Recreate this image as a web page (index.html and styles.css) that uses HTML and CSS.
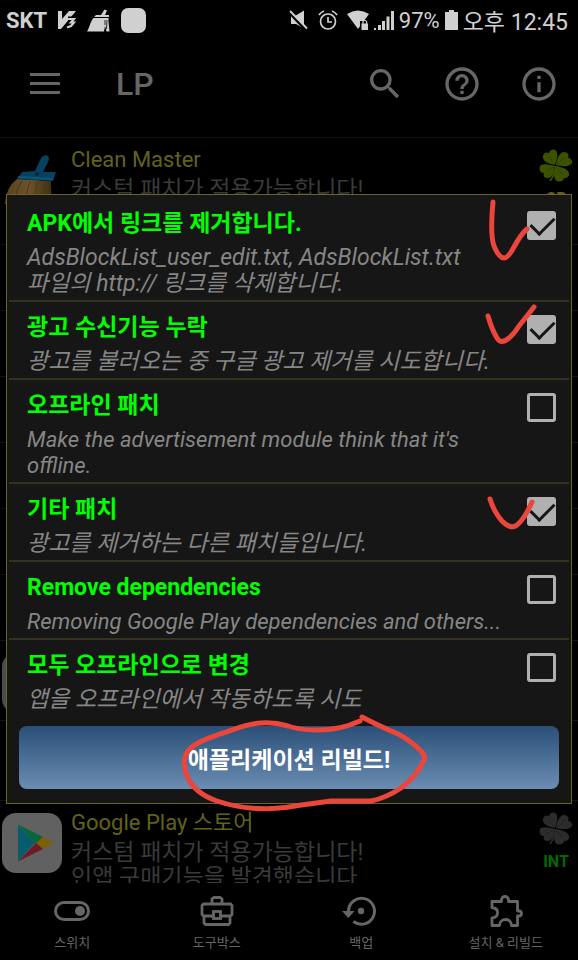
FILE: index.html
```html
<!DOCTYPE html>
<html lang="ko">
<head>
<meta charset="utf-8">
<meta name="viewport" content="width=device-width, initial-scale=1">
<title>LP</title>
<link rel="stylesheet" href="styles.css">
</head>
<body>
<svg class="defs" aria-hidden="true">
  <symbol id="clover" viewBox="0 0 34 34">
    <g fill="currentColor">
      <path d="M16 16C10 15 3 13 4 7C5 3 8 3 10 4C11 0 17-1 18 4C19 9 17 13 16 16Z"/>
      <path d="M17 16C18 9 21 2 26 3C30 4 30 7 29 9C33 9 35 14 31 16C27 18 21 17 17 16Z"/>
      <path d="M17 17C24 18 31 21 30 26C29 29 27 29 25 29C25 33 18 34 16 30C14 26 16 21 17 17Z"/>
      <path d="M16 17C15 22 14 29 9 29C5 29 4 27 5 24C1 24-1 19 2 16C6 14 12 16 16 17Z"/>
    </g>
    <path d="M17 17Q15 27 11 32" fill="none" stroke="currentColor" stroke-width="1.5"/>
    <path d="M16 16L10 8M18 16L26 8M17 18L24 26M15 18L7 22" fill="none" stroke="#000" stroke-opacity=".2" stroke-width="1"/>
  </symbol>
</svg>

<div class="status">
  <div class="status-side">
    <b class="carrier">SKT</b>
    <svg class="i-v3" viewBox="0 0 18 20" aria-hidden="true"><path d="M0 1h4v8L11 1h7L3 19H0Z" fill="currentColor"/><path d="M10 8.500h6L13 12h3l-3 5-5 2" fill="none" stroke="#000" stroke-width="4"/><path d="M10 9h6l-3 3.500h3L13 16l-4 1.500" fill="none" stroke="currentColor" stroke-width="2.200"/></svg>
    <svg class="i-broom" viewBox="0 0 23 23" aria-hidden="true"><path d="M14 6l3.500-5.500L20 1.500 18 6h4v2H7L9 6ZM6.500 9h15v4l1 9.500h-3L18 17l-1 5.500H0C3 18 3 13 6.500 9Z" fill="currentColor"/><path d="M18 11v5M20 11l-.5 9" stroke="#000" stroke-width=".8"/></svg>
    <span class="app-blob"></span>
  </div>
  <div class="status-side status-right">
    <svg class="i-mute" viewBox="0 0 20 20" aria-hidden="true"><path d="M2 6h4l9-5.500v18L7 14H2Z" fill="currentColor"/><path d="M0 2l17 18" stroke="#000" stroke-width="3"/><path d="M1 1l17 17.500" stroke="currentColor" stroke-width="1.800"/></svg>
    <svg class="i-alarm" viewBox="0 0 20 20" aria-hidden="true"><g fill="none" stroke="currentColor" stroke-width="1.700"><circle cx="10" cy="11.500" r="7.500"/><path d="M10 7v5h4M1 5Q3 2 6 1M19 5Q17 2 14 1"/></g></svg>
    <svg class="i-wifi" viewBox="0 0 22 20" aria-hidden="true"><path d="M0 4Q11-3 22 4L11 19Z" fill="currentColor"/><path d="M13 11h9v9h-9Z" fill="#000"/><path d="M14.500 13.500h6.500V20h-6.500Z" fill="currentColor"/><path d="M16 14v-2.500q1.800-2.500 3.600 0V14" fill="none" stroke="currentColor" stroke-width="1.200"/></svg>
    <svg class="i-signal" viewBox="0 0 20 20" aria-hidden="true"><path d="M0 18h2v2H0ZM4 15h3v5H4ZM8 11h3v9H8ZM12.500 6.500h3V20h-3ZM17 1h3v19h-3Z" fill="currentColor"/></svg>
    <span class="percent">97%</span>
    <svg class="i-battery" viewBox="0 0 13 20" aria-hidden="true"><path d="M4 0h5v2h4v18H0V2h4Z" fill="currentColor"/></svg>
    <span class="clock">오후 12:45</span>
  </div>
</div>

<header class="appbar">
  <button class="icon-btn menu" aria-label="메뉴"><svg viewBox="0 0 30 22"><path d="M0 1.500h30M0 10.500h30M0 19.500h30" stroke="currentColor" stroke-width="3"/></svg></button>
  <h1>LP</h1>
  <div class="actions">
    <button class="icon-btn" aria-label="검색"><svg viewBox="0 0 24 24"><path fill="currentColor" d="M15.500 14h-.79l-.28-.27A6.471 6.471 0 0 0 16 9.500 6.500 6.500 0 1 0 9.500 16c1.610 0 3.090-.59 4.230-1.570l.27.28v.79l5 4.990L20.490 19l-4.990-5zm-6 0C7.010 14 5 11.990 5 9.500S7.010 5 9.500 5 14 7.010 14 9.500 11.990 14 9.500 14z"/></svg></button>
    <button class="icon-btn" aria-label="도움말"><svg viewBox="0 0 24 24"><path fill="currentColor" d="M11 18h2v-2h-2v2zm1-16C6.480 2 2 6.480 2 12s4.480 10 10 10 10-4.480 10-10S17.520 2 12 2zm0 18c-4.410 0-8-3.590-8-8s3.590-8 8-8 8 3.590 8 8-3.590 8-8 8zm0-14c-2.210 0-4 1.790-4 4h2c0-1.100.9-2 2-2s2 .9 2 2c0 2-3 1.750-3 5h2c0-2.250 3-2.500 3-5 0-2.210-1.790-4-4-4z"/></svg></button>
    <button class="icon-btn" aria-label="정보"><svg viewBox="0 0 24 24"><path fill="currentColor" d="M11 17h2v-6h-2v6zm1-15C6.480 2 2 6.480 2 12s4.480 10 10 10 10-4.480 10-10S17.520 2 12 2zm0 18c-4.410 0-8-3.590-8-8s3.590-8 8-8 8 3.590 8 8-3.590 8-8 8zM11 9h2V7h-2v2z"/></svg></button>
  </div>
</header>

<ul class="apps">
  <li class="app first">
    <svg class="app-icon" viewBox="0 0 60 60" aria-hidden="true">
      <defs><linearGradient id="hair" x1="0" x2="1"><stop offset="0" stop-color="#59431c"/><stop offset=".5" stop-color="#6b532a"/><stop offset="1" stop-color="#3d2c12"/></linearGradient></defs>
      <path d="M15 35L49 37Q49 50 51 60H3Q4 43 15 35Z" fill="url(#hair)"/>
      <path d="M20 37Q14 45 13 60M28 37Q24 47 24 60M35 38Q33 48 34 60M43 38Q42 48 44 60" fill="none" stroke="#4a3718"/>
      <path d="M20 28L33 27L39 14Q42 10 46 12Q48 14 46 18L41 28L54 28L51 37L15 35Z" fill="#08405f"/>
      <path d="M16 33L51 35" stroke="#0b567a" stroke-width="2"/>
      <circle cx="35" cy="30" r="2" fill="#052a42"/>
    </svg>
    <div class="app-text"><h2>Clean Master</h2><p>커스텀 패치가 적용가능합니다!</p></div>
    <div class="app-mark lucky"><svg viewBox="0 0 34 34" aria-hidden="true"><use href="#clover"/></svg><b>CB</b></div>
  </li>
  <li class="app small"></li>
  <li class="app small"></li>
  <li class="app small"></li>
  <li class="app small"></li>
  <li class="app small"></li>
  <li class="app small"></li>
  <li class="app mid"><span class="tile"></span></li>
  <li class="app mid"></li>
  <li class="app">
    <svg class="app-icon" viewBox="0 0 60 60" aria-hidden="true">
      <rect width="60" height="60" rx="14" fill="#616161"/>
      <path d="M16 12V48L33 30Z" fill="#065c6b"/>
      <path d="M16 11.500L41 24L34 31Z" fill="#03683b"/>
      <path d="M41 24L50 28.500Q51.500 30 50 31.500L41 36L34 30Z" fill="#7d5f08"/>
      <path d="M16 48.500L34 30L41 36Z" fill="#6f1a24"/>
    </svg>
    <div class="app-text"><h2>Google Play 스토어</h2><p>커스텀 패치가 적용가능합니다!<br>인앱 구매기능을 발견했습니다</p></div>
    <div class="app-mark"><svg viewBox="0 0 34 34" aria-hidden="true"><use href="#clover"/></svg><b>INT</b></div>
  </li>
</ul>

<nav class="tabs">
  <button><svg viewBox="0 0 40 34" aria-hidden="true"><rect x="3.500" y="8.500" width="33" height="17" rx="8.500" fill="none" stroke="currentColor" stroke-width="3"/><circle cx="28" cy="17" r="5" fill="currentColor"/></svg>스위치</button>
  <button><svg viewBox="0 0 40 34" aria-hidden="true"><g fill="none" stroke="currentColor" stroke-width="2.800"><path d="M15 10V5l2-1.500h6L25 5v5M16 22H6.500L5 20.500v-9L6.500 10h27l1.500 1.500v9L33.500 22H24M7 22v7L8.500 30.500h23l1.500-1.500v-7"/><rect x="16.500" y="17.500" width="7" height="7"/></g></svg>도구박스</button>
  <button><svg viewBox="0 0 40 34" aria-hidden="true"><path d="M7.500 18V17A13 13 0 1 1 12.500 27.500" fill="none" stroke="currentColor" stroke-width="3"/><path d="M1 17h12.500L7.300 24Z" fill="currentColor"/><circle cx="20" cy="17" r="3.200" fill="currentColor"/></svg>백업</button>
  <button><svg viewBox="0 0 40 34" aria-hidden="true"><path d="M6 7.500h9.500V6a3.500 3.500 0 0 1 7 0v1.500h9V17h1.500a2.500 2.500 0 0 1 0 5h-1.500v9.500H25.500C25.500 23.500 13.500 23.500 13.500 31.500H6V24C13.500 23 13.500 14.500 6 13.500Z" fill="none" stroke="currentColor" stroke-width="2.800" stroke-linejoin="round"/></svg>설치 &amp; 리빌드</button>
</nav>

<div class="overlay">
  <form class="dialog" role="dialog">
    <div class="option">
      <label for="o1"><strong>APK에서 링크를 제거합니다.</strong><em>AdsBlockList_user_edit.txt, AdsBlockList.txt 파일의 http:// 링크를 삭제합니다.</em></label>
      <input type="checkbox" id="o1" checked>
      <svg class="scribble" viewBox="0 0 80 70" aria-hidden="true"><path d="M13 4C11 26 11 40 14 48Q19 60 24 60Q28 60 34 49Q41 36 47 31"/></svg>
    </div>
    <div class="option">
      <label for="o2"><strong>광고 수신기능 누락</strong><em>광고를 불러오는 중 구글 광고 제거를 시도합니다.</em></label>
      <input type="checkbox" id="o2" checked>
      <svg class="scribble" viewBox="0 0 80 70" aria-hidden="true"><path d="M8 14Q12 28 17 36Q21 43 29 36Q34 32 39 24L54 5"/></svg>
    </div>
    <div class="option">
      <label for="o3"><strong>오프라인 패치</strong><em lang="en">Make the advertisement module think that it's offline.</em></label>
      <input type="checkbox" id="o3">
    </div>
    <div class="option">
      <label for="o4"><strong>기타 패치</strong><em>광고를 제거하는 다른 패치들입니다.</em></label>
      <input type="checkbox" id="o4" checked>
      <svg class="scribble" viewBox="0 0 80 70" aria-hidden="true"><path d="M10 15Q14 28 22 37Q31 46 37 41Q44 36 52 18"/></svg>
    </div>
    <div class="option">
      <label for="o5"><strong>Remove dependencies</strong><em lang="en">Removing Google Play dependencies and others...</em></label>
      <input type="checkbox" id="o5">
    </div>
    <div class="option">
      <label for="o6"><strong>모두 오프라인으로 변경</strong><em>앱을 오프라인에서 작동하도록 시도</em></label>
      <input type="checkbox" id="o6">
    </div>
    <div class="submit">
      <button type="button">애플리케이션 리빌드!</button>
      <svg class="ring" viewBox="0 0 254 104" aria-hidden="true"><path d="M182 11Q160 21 137 20Q122 20 110 16Q96 12 83 13C66 14 56 20 42 24C28 29 13 34 8 44Q4 54 9 66Q16 83 39 91Q66 100 94 98.500Q108 98 120 95.500L153 91H193Q208 88 223 78Q239 66 246 50Q248 46 243 41Q232 30 220 24Q199 15 184 7"/></svg>
    </div>
  </form>
</div>
</body>
</html>
```
FILE: styles.css
```css
* { box-sizing: border-box; }

body {
  margin: 0;
  height: 100vh;
  display: flex;
  flex-direction: column;
  overflow: hidden;
  background: #000;
  color: #666;
  font-family: Roboto, "Noto Sans CJK KR", sans-serif;
  font-size: 23px;
  word-break: keep-all;
}

h1, h2, p, ul { margin: 0; padding: 0; font-weight: 400; }
button { border: 0; padding: 0; background: none; color: inherit; font: inherit; }
svg { display: block; }
.defs { position: absolute; width: 0; height: 0; }

/* Status bar */
.status {
  display: flex;
  justify-content: space-between;
  align-items: center;
  height: 38px;
  padding: 2px 10px 0 6px;
  color: #d0d0d0;
}
.status-side { display: flex; align-items: center; gap: 11px; }
.status-right { gap: 5px; }
.carrier { font-size: 22px; }
.i-v3 { width: 18px; height: 20px; }
.i-broom { width: 23px; height: 23px; }
.app-blob { width: 25px; height: 25px; border-radius: 7px; background: currentColor; }
.i-mute, .i-alarm { width: 20px; height: 20px; margin-right: 4px; }
.i-wifi { width: 22px; height: 20px; }
.i-signal { width: 20px; height: 20px; }
.i-battery { width: 13px; height: 20px; }
.percent { font-size: 22px; }

/* App bar */
.appbar {
  display: flex;
  align-items: center;
  height: 100px;
  padding: 0 19px 8px 30px;
  border-bottom: 1px solid #141414;
}
.menu svg { width: 30px; height: 22px; }
.appbar h1 { margin-left: 56px; font-size: 32px; font-weight: 500; }
.actions { display: flex; gap: 37px; margin-left: auto; }
.actions svg { width: 40px; height: 40px; }

/* App list */
.apps { flex: 1; min-height: 0; overflow: hidden; list-style: none; }
.app { display: flex; padding: 0 5px 0 2px; border-bottom: 1px solid #121212; }
.first { height: 107px; }
.small { height: 66px; }
.mid { height: 80px; }
.app-icon { width: 60px; height: 60px; margin-top: 12px; }
.first .app-icon { margin-top: 6px; }
.tile { width: 60px; height: 60px; margin-top: 12px; border-radius: 14px; background: #4c4c4c; }
.app-text { flex: 1; padding: 8px 0 0 9px; }
.app-text h2 { font-size: 22px; line-height: 28px; color: #62621a; }
.app-text p { margin-top: 3px; line-height: 25px; color: #3a3a3a; white-space: nowrap; }
.app-mark { width: 34px; padding-top: 11px; text-align: center; color: #2c2c2c; }
.app-mark svg { width: 34px; height: 34px; }
.app-mark b { display: block; margin-top: 7px; font-size: 16px; line-height: 18px; color: #006a00; }
.lucky { color: #3d5200; }
.lucky b { color: #62621a; }

/* Bottom tabs */
.tabs { display: grid; grid-template-columns: repeat(4, 1fr); height: 77px; padding-top: 11px; }
.tabs button { display: flex; flex-direction: column; align-items: center; gap: 6px; font-size: 13px; line-height: 18px; }
.tabs svg { width: 40px; height: 34px; }

/* Patch dialog, centred below the status bar */
.overlay { position: fixed; inset: 38px 0 0; display: grid; align-items: center; padding: 0 6px; }
.dialog { border: 1px solid #6a6428; padding: 3px 2px 14px; background: #161616; }
.option {
  position: relative;
  display: flex;
  align-items: flex-start;
  justify-content: space-between;
  gap: 14px;
  padding: 13px 13px 3px 18px;
  border-bottom: 2px solid #34321f;
}
.option:nth-last-child(2) { border-bottom: 0; }
.option label { display: grid; gap: 8px; line-height: 26px; }
.option strong { color: #0f0; font-weight: 700; }
.option em { color: #868686; }
.option em:lang(en) { font-size: 22px; }
.option input {
  appearance: none;
  flex: none;
  width: 29px;
  height: 29px;
  margin: 0;
  border: 3px solid #b0b0b0;
  border-radius: 3px;
}
.option input:checked { background: #b0b0b0; }
.option input:checked::before {
  content: "";
  display: block;
  width: 20px;
  height: 11px;
  margin: 2px 0 0 1px;
  border: solid #161616;
  border-width: 0 0 3px 3px;
  transform: rotate(-45deg);
}
.submit { position: relative; margin: 10px 10px 0; }
.submit button {
  display: block;
  width: 100%;
  height: 63px;
  border-radius: 8px;
  background: linear-gradient(#2b4f77, #6b8db4);
  color: #fff;
  font-weight: 700;
}

/* Hand-drawn marks over the dialog */
.scribble, .ring { position: absolute; fill: none; stroke: #ea463b; stroke-width: 5; stroke-linecap: round; stroke-linejoin: round; pointer-events: none; }
.scribble { z-index: 1; top: 0; right: 9px; width: 80px; height: 70px; }
.ring { top: -16px; left: calc(50% - 111px); width: 254px; height: 104px; }
```
